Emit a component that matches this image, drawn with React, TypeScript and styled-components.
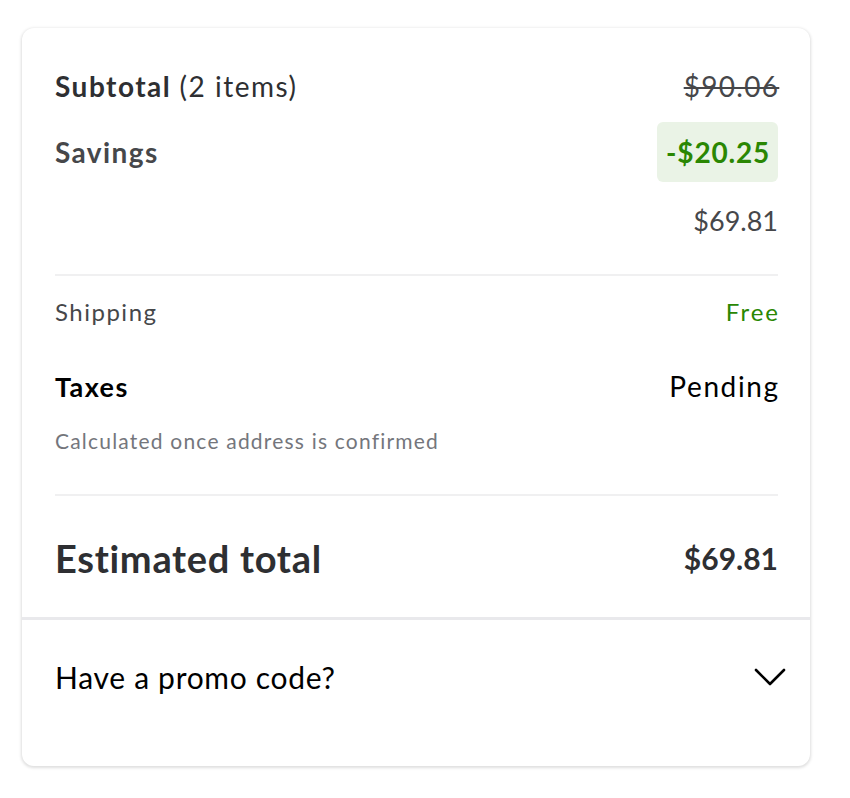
import React from "react";
import styled, { createGlobalStyle } from "styled-components";

const Global = createGlobalStyle`
  html, body { margin: 0; padding: 0; background: #fff; }
  body { font-family: Lato, "Open Sans", sans-serif; -webkit-font-smoothing: antialiased; }
`;

const Page = styled.div`
  padding: 28px 40px 32px 22px;
`;

const Card = styled.div`
  width: 788px;
  box-sizing: border-box;
  background: #fff;
  border-radius: 12px;
  box-shadow: 0 1px 3px 1px rgba(0, 0, 0, 0.13);
  overflow: hidden;
`;

const Summary = styled.div`
  padding: 40px 32px 35px 33px;
  border-bottom: 3px solid #e9e9ec;
  display: flex;
  flex-direction: column;
`;

const Row = styled.div<{ $h: number; $mt?: number }>`
  display: flex;
  align-items: center;
  justify-content: space-between;
  height: ${(p) => p.$h}px;
  margin-top: ${(p) => p.$mt ?? 0}px;
`;

const Label = styled.span<{
  $size: number;
  $weight?: number;
  $color?: string;
  $ls?: number;
}>`
  font-size: ${(p) => p.$size}px;
  font-weight: ${(p) => p.$weight ?? 400};
  color: ${(p) => p.$color ?? "#2e2f32"};
  letter-spacing: ${(p) => p.$ls ?? 0}px;
  margin-right: ${(p) => -(p.$ls ?? 0)}px;
  white-space: nowrap;
`;

const Light = styled.span`
  font-weight: 400;
`;

const Struck = styled.span`
  font-size: 28px;
  letter-spacing: 1.3px;
  margin-right: -1.3px;
  color: #46474a;
  text-decoration: line-through;
  text-decoration-thickness: 2px;
`;

const SavingsPill = styled.span`
  display: inline-flex;
  align-items: center;
  height: 60px;
  padding: 0 8px 0 9px;
  border-radius: 6px;
  background: #eaf3e6;
  color: #2a8703;
  font-size: 28px;
  letter-spacing: 0.8px;
  font-weight: 700;
`;

const Divider = styled.div<{ $mt: number }>`
  height: 2px;
  background: #f0f0f1;
  margin-top: ${(p) => p.$mt}px;
`;

const Note = styled.div`
  font-size: 21px;
  letter-spacing: 1.2px;
  color: #74767c;
  height: 26px;
  line-height: 26px;
  margin-top: 25px;
`;

const Promo = styled.button`
  all: unset;
  box-sizing: border-box;
  width: 100%;
  display: flex;
  align-items: center;
  justify-content: space-between;
  padding: 42px 24px 74px 33px;
  cursor: pointer;
`;

const PromoText = styled.span`
  font-size: 30px;
  letter-spacing: 0.7px;
  color: #000;
  line-height: 30px;
`;

const Chevron = () => (
  <svg width="32" height="18" viewBox="0 0 32 18" fill="none">
    <polyline
      points="2,2 16,16 30,2"
      stroke="#000"
      strokeWidth="2.6"
      strokeLinecap="round"
      strokeLinejoin="round"
    />
  </svg>
);

export default function App() {
  return (
    <>
      <Global />
      <Page>
        <Card>
          <Summary>
            <Row $h={36}>
              <Label $size={28} $weight={700} $ls={1.5}>
                Subtotal <Light>(2 items)</Light>
              </Label>
              <Struck>$90.06</Struck>
            </Row>
            <Row $h={60} $mt={18}>
              <Label $size={28} $weight={700} $color="#46474a" $ls={1.4}>
                Savings
              </Label>
              <SavingsPill>-$20.25</SavingsPill>
            </Row>
            <Row $h={36} $mt={20}>
              <span />
              <Label $size={27} $color="#46474a">
                $69.81
              </Label>
            </Row>
            <Divider $mt={36} />
            <Row $h={30} $mt={20}>
              <Label $size={24} $color="#46474a" $ls={1.5}>
                Shipping
              </Label>
              <Label $size={24} $color="#2a8703" $ls={2}>
                Free
              </Label>
            </Row>
            <Row $h={34} $mt={43}>
              <Label $size={27} $weight={700} $color="#000" $ls={1.4}>
                Taxes
              </Label>
              <Label $size={28} $color="#000" $ls={1.6}>
                Pending
              </Label>
            </Row>
            <Note>Calculated once address is confirmed</Note>
            <Divider $mt={40} />
            <Row $h={48} $mt={38}>
              <Label $size={38} $weight={700} $ls={0.7}>
                Estimated total
              </Label>
              <Label $size={30} $weight={700}>
                $69.81
              </Label>
            </Row>
          </Summary>
          <Promo type="button">
            <PromoText>Have a promo code?</PromoText>
            <Chevron />
          </Promo>
        </Card>
      </Page>
    </>
  );
}
